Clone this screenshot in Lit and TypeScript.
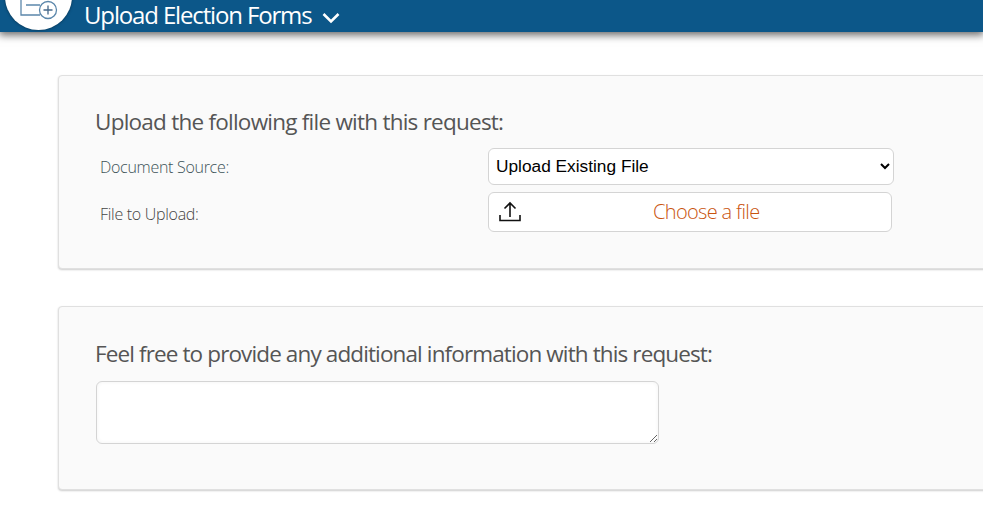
import { LitElement, html, css } from "lit";
import { customElement } from "lit/decorators.js";

@customElement("app-root")
export class AppRoot extends LitElement {
  static styles = css`
    :host { display: block; height: 513px; overflow: hidden; background: #fff; font-family: "Open Sans", "Liberation Sans", sans-serif; }
    * { box-sizing: border-box; }
    .bar { height: 32px; background: #0c5789; box-shadow: 0 2px 8px 1px rgba(0,0,0,.6); display: flex; align-items: center; padding: 0 0 3px 84px; gap: 11px; position: relative; }
    .badge { position: absolute; left: 5px; top: -37px; width: 67px; height: 67px; border-radius: 50%; background: #fff; box-shadow: 0 0 3px rgba(0,0,0,.5); overflow: hidden; }
    .badge svg { position: absolute; left: 13px; top: 40px; overflow: visible; }
    h1 { margin: 0; color: #fff; font-weight: 400; font-size: 24px; letter-spacing: -1.15px; line-height: 29px; white-space: nowrap; }
    .chev { margin-top: 6px; }
    .main { padding: 43px 0 0 58px; display: flex; flex-direction: column; gap: 37px; width: 1100px; }
    .card { background: #fafafa; border: 1px solid #e0e0e0; border-radius: 4px; box-shadow: 0 1px 2px rgba(0,0,0,.2); padding: 32px 37px 0; }
    .one { height: 194px; padding-top: 31px; }
    .two { height: 184px; }
    h2 { margin: 0 0 0 -1px; font-weight: 400; font-size: 22.5px; line-height: 30px; color: #555; white-space: nowrap; }
    .one h2 { letter-spacing: -.76px; }
    .two h2 { letter-spacing: -.88px; }
    .row { display: grid; grid-template-columns: 392px auto; justify-content: start; align-items: center; }
    .r1 { margin-top: 11px; }
    .r2 { margin-top: 7px; }
    label { font-size: 16px; font-weight: 300; color: #444; letter-spacing: -.29px; padding-left: 4px; white-space: nowrap; }
    .r1 label { color: #3d5358; }
    .r2 label { padding-top: 4px; }
    select { width: 406px; height: 37px; border: 1px solid #d4d4d4; border-radius: 6px; background: #fff; color: #000; font: 400 17.3px "Liberation Sans", Arial, sans-serif; padding: 0 3px 2px; outline: none; }
    .file { width: 404px; height: 40px; border: 1px solid #d4d4d4; border-radius: 6px; background: #fff; display: flex; align-items: center; padding: 0 9px; }
    .file svg { display: block; flex: none; }
    .file span { color: #c9540f; font-size: 20px; font-weight: 300; letter-spacing: -.65px; margin: -1px 0 0 131px; white-space: nowrap; }
    textarea { display: block; margin-top: 12px; width: 563px; height: 63px; border: 1px solid #d4d4d4; border-radius: 6px; background: #fff; outline: none; box-shadow: inset 0 0 4px rgba(0,0,0,.05); }
  `;

  render() {
    return html`
      <div class="bar">
        <div class="badge">
          <svg width="42" height="30" viewBox="0 0 42 30" fill="none" stroke="#5b87ab" stroke-width="1.3">
            <path d="M3 -8V12H22" />
            <path d="M8 2H22" />
            <circle cx="30" cy="7" r="8.500" fill="#fff" />
            <path d="M25.500 7H34.500M30 2.500V11.500" stroke="#44688a" />
          </svg>
        </div>
        <h1>Upload Election Forms</h1>
        <svg class="chev" width="18" height="12" viewBox="0 0 18 12" fill="none" stroke="#fff" stroke-width="2.600"><path d="M1.500 2l7.500 7.500L16.500 2" /></svg>
      </div>
      <div class="main">
        <section class="card one">
          <h2>Upload the following file with this request:</h2>
          <div class="row r1">
            <label>Document Source:</label>
            <select><option>Upload Existing File</option></select>
          </div>
          <div class="row r2">
            <label>File to Upload:</label>
            <div class="file">
              <svg width="24" height="22" viewBox="0 0 24 22" fill="none" stroke="#111" stroke-width="1.600">
                <path d="M2 14v5.500h20V14" />
                <path d="M12 16V2M6.500 7.500L12 2l5.500 5.500" />
              </svg>
              <span>Choose a file</span>
            </div>
          </div>
        </section>
        <section class="card two">
          <h2>Feel free to provide any additional information with this request:</h2>
          <textarea></textarea>
        </section>
      </div>
    `;
  }
}
